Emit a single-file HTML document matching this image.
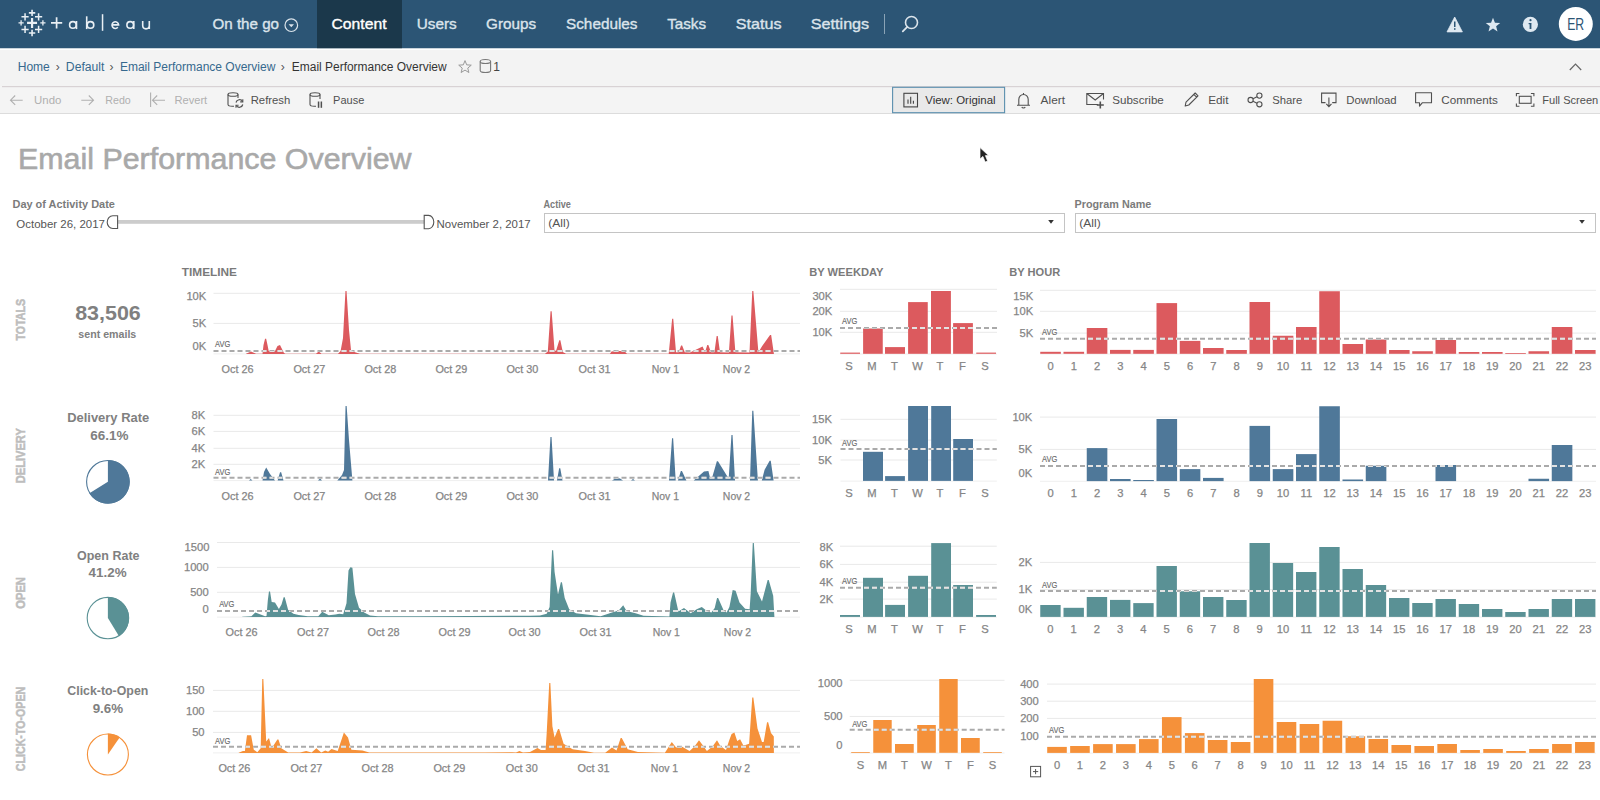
<!DOCTYPE html>
<html><head><meta charset="utf-8"><title>Email Performance Overview</title>
<style>
html,body{margin:0;padding:0;background:#fff;}
body{width:1600px;height:800px;overflow:hidden;position:relative;font-family:"Liberation Sans",sans-serif;}
svg{position:absolute;left:0;top:0;display:block;}
text{font-family:"Liberation Sans",sans-serif;}
</style></head><body>
<svg width="1600" height="800" viewBox="0 0 1600 800">
<rect x="0" y="0" width="1600" height="800" fill="#ffffff"/>

<rect x="0" y="0" width="1600" height="48.5" fill="#2c5575"/>
<rect x="317" y="0" width="85" height="48.5" fill="#1b384b"/>
<rect x="0" y="48.5" width="1600" height="1.6" fill="#ffffff"/>
<path d="M27.06 22.90H37.06M32.06 17.90V27.90" stroke="#e9eff4" stroke-width="2.2" fill="none"/>
<path d="M28.86 12.90H35.26M32.06 9.70V16.10" stroke="#e9eff4" stroke-width="1.6" fill="none"/>
<path d="M28.86 33.00H35.26M32.06 29.80V36.20" stroke="#e9eff4" stroke-width="1.6" fill="none"/>
<path d="M18.50 22.90H23.70M21.10 20.30V25.50" stroke="#e9eff4" stroke-width="1.3" fill="none"/>
<path d="M40.30 22.90H45.50M42.90 20.30V25.50" stroke="#e9eff4" stroke-width="1.3" fill="none"/>
<path d="M21.46 16.80H28.66M25.06 13.20V20.40" stroke="#e9eff4" stroke-width="1.5" fill="none"/>
<path d="M35.00 16.80H42.20M38.60 13.20V20.40" stroke="#e9eff4" stroke-width="1.5" fill="none"/>
<path d="M21.46 29.40H28.66M25.06 25.80V33.00" stroke="#e9eff4" stroke-width="1.5" fill="none"/>
<path d="M35.00 29.40H42.20M38.60 25.80V33.00" stroke="#e9eff4" stroke-width="1.5" fill="none"/>
<path d="M51.00 22.90H62.20M56.60 17.30V28.50" stroke="#e9eff4" stroke-width="1.7" fill="none"/>
<circle cx="72.90" cy="24.95" r="3.3" fill="none" stroke="#e9eff4" stroke-width="1.6"/>
<path d="M76.50 21.0V29.1" stroke="#e9eff4" stroke-width="1.6"/>
<circle cx="130.20" cy="24.95" r="3.3" fill="none" stroke="#e9eff4" stroke-width="1.6"/>
<path d="M133.80 21.0V29.1" stroke="#e9eff4" stroke-width="1.6"/>
<circle cx="90.5" cy="24.95" r="3.3" fill="none" stroke="#e9eff4" stroke-width="1.6"/>
<path d="M86.7 16.3V29.1" stroke="#e9eff4" stroke-width="1.6"/>
<path d="M112.1 24.9H118.6A3.3 3.3 0 1 0 117.8 27.3" fill="none" stroke="#e9eff4" stroke-width="1.6"/>
<path d="M142.7 20.9V25.6A3.3 3.3 0 0 0 149.3 25.6M149.3 20.9V29.1" fill="none" stroke="#e9eff4" stroke-width="1.6"/>
<rect x="101.8" y="14.2" width="1.5" height="16.6" fill="#e9eff4"/>
<text x="212.50" y="29.00" font-size="14.8" fill="#dbe4eb" textLength="66.50" lengthAdjust="spacingAndGlyphs" stroke="#dbe4eb" stroke-width="0.35">On the go</text>
<circle cx="291.3" cy="25.2" r="6.3" fill="none" stroke="#dbe4eb" stroke-width="1.2"/>
<path d="M288.6 24.2h5.4l-2.7 3z" fill="#dbe4eb"/>
<text x="331.50" y="29.00" font-size="14.8" fill="#ffffff" textLength="55.00" lengthAdjust="spacingAndGlyphs" stroke="#ffffff" stroke-width="0.35">Content</text>
<text x="416.75" y="29.00" font-size="14.8" fill="#dbe4eb" textLength="40.00" lengthAdjust="spacingAndGlyphs" stroke="#dbe4eb" stroke-width="0.35">Users</text>
<text x="486.10" y="29.00" font-size="14.8" fill="#dbe4eb" textLength="50.10" lengthAdjust="spacingAndGlyphs" stroke="#dbe4eb" stroke-width="0.35">Groups</text>
<text x="566.00" y="29.00" font-size="14.8" fill="#dbe4eb" textLength="71.50" lengthAdjust="spacingAndGlyphs" stroke="#dbe4eb" stroke-width="0.35">Schedules</text>
<text x="667.20" y="29.00" font-size="14.8" fill="#dbe4eb" textLength="38.90" lengthAdjust="spacingAndGlyphs" stroke="#dbe4eb" stroke-width="0.35">Tasks</text>
<text x="735.80" y="29.00" font-size="14.8" fill="#dbe4eb" textLength="45.70" lengthAdjust="spacingAndGlyphs" stroke="#dbe4eb" stroke-width="0.35">Status</text>
<text x="810.80" y="29.00" font-size="14.8" fill="#dbe4eb" textLength="58.40" lengthAdjust="spacingAndGlyphs" stroke="#dbe4eb" stroke-width="0.35">Settings</text>
<rect x="884" y="14" width="1" height="20" fill="#8aa3b6"/>
<circle cx="911.5" cy="22.5" r="6" fill="none" stroke="#dbe4eb" stroke-width="1.6"/>
<path d="M907.3 26.8L902.8 31.3" stroke="#dbe4eb" stroke-width="1.8" stroke-linecap="round"/>
<path d="M1454.7 17 L1462.4 31.9 L1447 31.9 Z" fill="#dfe9f1" stroke="#dfe9f1" stroke-width="0.8" stroke-linejoin="round"/>
<rect x="1454" y="21.5" width="1.5" height="5.5" fill="#2c5575"/><rect x="1454" y="28.2" width="1.5" height="1.6" fill="#2c5575"/>
<polygon points="1493.00,17.70 1494.94,22.63 1500.23,22.95 1496.14,26.32 1497.47,31.45 1493.00,28.60 1488.53,31.45 1489.86,26.32 1485.77,22.95 1491.06,22.63" fill="#dfe9f1"/>
<circle cx="1530.4" cy="24.4" r="7.6" fill="#dfe9f1"/>
<rect x="1529.6" y="23" width="1.8" height="6" fill="#2c5575"/><rect x="1528.6" y="23" width="2.5" height="1.2" fill="#2c5575"/><circle cx="1530.5" cy="20.2" r="1.1" fill="#2c5575"/>
<circle cx="1575.8" cy="23.9" r="17" fill="#ffffff"/>
<text x="1567.20" y="29.90" font-size="16" fill="#2c5575" textLength="17.00" lengthAdjust="spacingAndGlyphs">ER</text>
<rect x="0" y="50" width="1600" height="36" fill="#f3f3f3"/>
<text x="17.70" y="71.00" font-size="12" fill="#36698e" textLength="32.10" lengthAdjust="spacingAndGlyphs">Home</text>
<text x="55.80" y="70.50" font-size="12" fill="#555">›</text>
<text x="65.85" y="71.00" font-size="12" fill="#36698e" textLength="38.55" lengthAdjust="spacingAndGlyphs">Default</text>
<text x="109.60" y="70.50" font-size="12" fill="#555">›</text>
<text x="119.90" y="71.00" font-size="12" fill="#36698e" textLength="155.50" lengthAdjust="spacingAndGlyphs">Email Performance Overview</text>
<text x="280.80" y="70.50" font-size="12" fill="#555">›</text>
<text x="291.80" y="71.00" font-size="12" fill="#333333" textLength="154.85" lengthAdjust="spacingAndGlyphs">Email Performance Overview</text>
<polygon points="465.00,60.60 466.70,64.85 471.28,65.16 467.76,68.10 468.88,72.54 465.00,70.10 461.12,72.54 462.24,68.10 458.72,65.16 463.30,64.85" fill="none" stroke="#9a9a9a" stroke-width="1" stroke-linejoin="round"/>
<path d="M480.2 61.5 V70.5 A5.2 2 0 0 0 490.6 70.5 V61.5" fill="none" stroke="#777" stroke-width="1.1"/>
<ellipse cx="485.4" cy="61.5" rx="5.2" ry="2" fill="none" stroke="#777" stroke-width="1.1"/>
<text x="493.30" y="71.00" font-size="12" fill="#444">1</text>
<path d="M1569.8 70 L1575.5 64 L1581.2 70" fill="none" stroke="#666" stroke-width="1.2"/>
<rect x="0" y="86" width="1600" height="27" fill="#f4f4f4"/>
<rect x="2" y="86" width="1598" height="1.2" fill="#d8d2d4"/>
<rect x="0" y="113" width="1600" height="1" fill="#dcdcdc"/>
<path d="M22.7 100.2H10.5M15.2 95.5L10.5 100.2L15.2 104.9" fill="none" stroke="#b0b0b0" stroke-width="1.1"/>
<text x="34.10" y="104.00" font-size="11.2" fill="#b0b0b0" textLength="27.30" lengthAdjust="spacingAndGlyphs">Undo</text>
<path d="M81.3 100.2H93.5M88.8 95.5L93.5 100.2L88.8 104.9" fill="none" stroke="#b0b0b0" stroke-width="1.1"/>
<text x="105.30" y="104.00" font-size="11.2" fill="#b0b0b0" textLength="25.50" lengthAdjust="spacingAndGlyphs">Redo</text>
<path d="M150.6 92.6V106.9M165 100.2H152.5M157.2 95.5L152.5 100.2L157.2 104.9" fill="none" stroke="#b0b0b0" stroke-width="1.1"/>
<text x="174.40" y="104.00" font-size="11.2" fill="#b0b0b0" textLength="32.80" lengthAdjust="spacingAndGlyphs">Revert</text>
<path d="M228 94.5V104.5A5 1.8 0 0 0 234 106.2M238 94.5V98" fill="none" stroke="#505050" stroke-width="1.1"/>
<ellipse cx="233" cy="94.5" rx="5" ry="1.8" fill="none" stroke="#505050" stroke-width="1.1"/>
<path d="M236 102.5A3.6 3.6 0 0 1 242.6 101.5M242.8 104.5A3.6 3.6 0 0 1 236.2 105.5" fill="none" stroke="#505050" stroke-width="1.2"/>
<path d="M242.8 99.3v2.6h-2.6M236 107.8v-2.6h2.6" fill="none" stroke="#505050" stroke-width="1.1"/>
<text x="250.70" y="104.00" font-size="11.2" fill="#505050" textLength="39.60" lengthAdjust="spacingAndGlyphs">Refresh</text>
<path d="M310 94.5V104.5A5 1.8 0 0 0 316 106.2M320 94.5V99" fill="none" stroke="#505050" stroke-width="1.1"/>
<ellipse cx="315" cy="94.5" rx="5" ry="1.8" fill="none" stroke="#505050" stroke-width="1.1"/>
<rect x="317.8" y="101.5" width="1.5" height="6.3" fill="#505050"/><rect x="320.6" y="101.5" width="1.5" height="6.3" fill="#505050"/>
<text x="333.10" y="104.00" font-size="11.2" fill="#505050" textLength="31.20" lengthAdjust="spacingAndGlyphs">Pause</text>
<rect x="892.6" y="87.3" width="112" height="25.4" fill="#e9e9e9" stroke="#5a8fae" stroke-width="1.1"/>
<rect x="903.9" y="93.3" width="13.6" height="13.6" fill="none" stroke="#444" stroke-width="1.1"/>
<path d="M908 103.8V99.5M910.7 103.8V96.8M913.4 103.8V100.8" stroke="#444" stroke-width="1.1"/>
<text x="925.30" y="104.00" font-size="11.2" fill="#333333" textLength="70.30" lengthAdjust="spacingAndGlyphs">View: Original</text>
<path d="M1017 105.2H1030M1018.8 105.2V99.5A4.7 5 0 0 1 1028.2 99.5V105.2M1021.8 107A1.8 1.6 0 0 0 1025.2 107M1023.5 93v1.3" fill="none" stroke="#505050" stroke-width="1.1"/>
<text x="1040.60" y="104.00" font-size="11.2" fill="#505050" textLength="24.40" lengthAdjust="spacingAndGlyphs">Alert</text>
<path d="M1098 104.5H1086.8V93.5H1103.5V99.5M1086.8 93.5L1095.2 100L1103.5 93.5" fill="none" stroke="#505050" stroke-width="1.1"/>
<path d="M1100.3 101.5v7M1096.8 105h7" stroke="#505050" stroke-width="1.6"/>
<text x="1112.20" y="104.00" font-size="11.2" fill="#505050" textLength="51.60" lengthAdjust="spacingAndGlyphs">Subscribe</text>
<path d="M1185.2 106L1186 102.2L1195.2 93L1198 95.8L1188.8 105Z M1193.8 94.4l2.8 2.8" fill="none" stroke="#505050" stroke-width="1.1" stroke-linejoin="round"/>
<text x="1208.20" y="104.00" font-size="11.2" fill="#505050" textLength="20.30" lengthAdjust="spacingAndGlyphs">Edit</text>
<circle cx="1250.6" cy="100" r="2.6" fill="none" stroke="#505050" stroke-width="1.1"/><circle cx="1259.4" cy="95.6" r="2.6" fill="none" stroke="#505050" stroke-width="1.1"/><circle cx="1259.4" cy="104.3" r="2.6" fill="none" stroke="#505050" stroke-width="1.1"/>
<path d="M1253 98.8L1257 96.8M1253 101.2L1257 103.2" stroke="#505050" stroke-width="1.1"/>
<text x="1272.20" y="104.00" font-size="11.2" fill="#505050" textLength="30.10" lengthAdjust="spacingAndGlyphs">Share</text>
<path d="M1325.5 102.6H1321.6V93.1H1336V102.6H1332.2M1328.9 97.5V106.5M1326.3 103.8L1328.9 106.7L1331.5 103.8" fill="none" stroke="#505050" stroke-width="1.1"/>
<text x="1346.20" y="104.00" font-size="11.2" fill="#505050" textLength="50.50" lengthAdjust="spacingAndGlyphs">Download</text>
<path d="M1415.6 92.8H1431.5V102.8H1422.2L1419.5 106.1V102.8H1415.6Z" fill="none" stroke="#505050" stroke-width="1.1" stroke-linejoin="round"/>
<text x="1441.30" y="104.00" font-size="11.2" fill="#505050" textLength="56.50" lengthAdjust="spacingAndGlyphs">Comments</text>
<path d="M1516.4 96.3V93.5H1519.4M1530.9 93.5H1533.9V96.3M1533.9 103.4V106.2H1530.9M1519.4 106.2H1516.4V103.4" fill="none" stroke="#505050" stroke-width="1.1"/>
<rect x="1519.3" y="96.3" width="11.8" height="7" fill="none" stroke="#505050" stroke-width="1.1"/>
<text x="1542.20" y="104.00" font-size="11.2" fill="#505050" textLength="56.10" lengthAdjust="spacingAndGlyphs">Full Screen</text>
<text x="18.00" y="168.80" font-size="30.3" fill="#a9a9a9" textLength="393.50" lengthAdjust="spacingAndGlyphs" stroke="#a9a9a9" stroke-width="0.6">Email Performance Overview</text>
<text x="12.50" y="208.10" font-size="11.2" fill="#7b7b7b" font-weight="bold" textLength="102.40" lengthAdjust="spacingAndGlyphs">Day of Activity Date</text>
<text x="16.30" y="228.10" font-size="11.2" fill="#555555" textLength="88.60" lengthAdjust="spacingAndGlyphs">October 26, 2017</text>
<rect x="117.5" y="220" width="307" height="3.8" fill="#cccccc"/>
<path d="M117.6 215.8H112.8A5.6 6.35 0 0 0 112.8 228.5H117.6Z" fill="#ffffff" stroke="#555" stroke-width="1.1"/>
<path d="M424.2 215.4H428.6A5.2 6.65 0 0 1 428.6 228.7H424.2Z" fill="#ffffff" stroke="#555" stroke-width="1.1"/>
<text x="436.60" y="228.10" font-size="11.2" fill="#555555" textLength="94.10" lengthAdjust="spacingAndGlyphs">November 2, 2017</text>
<text x="543.50" y="207.80" font-size="11.2" fill="#7b7b7b" font-weight="bold" textLength="27.40" lengthAdjust="spacingAndGlyphs">Active</text>
<rect x="544.5" y="213.5" width="520" height="19" fill="#ffffff" stroke="#c4c4c4" stroke-width="1"/>
<text x="548.30" y="227.10" font-size="11.2" fill="#555555" textLength="21.40" lengthAdjust="spacingAndGlyphs">(All)</text>
<path d="M1048.2 220H1053.8L1051 223.8Z" fill="#333"/>
<text x="1074.50" y="207.60" font-size="11.2" fill="#7b7b7b" font-weight="bold" textLength="76.80" lengthAdjust="spacingAndGlyphs">Program Name</text>
<rect x="1075.5" y="213.5" width="520" height="19" fill="#ffffff" stroke="#c4c4c4" stroke-width="1"/>
<text x="1079.30" y="227.10" font-size="11.2" fill="#555555" textLength="21.40" lengthAdjust="spacingAndGlyphs">(All)</text>
<path d="M1579.2 220H1584.8L1582 223.8Z" fill="#333"/>
<path d="M980 147.6L980 159L982.9 156.4L985.2 162L987.6 161L985.4 155.6L988.6 155.6Z" fill="#222" stroke="#fff" stroke-width="0.7"/>
<text x="181.80" y="275.90" font-size="11.7" fill="#7a7a7a" font-weight="bold" textLength="55.20" lengthAdjust="spacingAndGlyphs">TIMELINE</text>
<text x="809.20" y="275.90" font-size="11.7" fill="#7a7a7a" font-weight="bold" textLength="74.20" lengthAdjust="spacingAndGlyphs">BY WEEKDAY</text>
<text x="1009.20" y="275.90" font-size="11.7" fill="#7a7a7a" font-weight="bold" textLength="51.00" lengthAdjust="spacingAndGlyphs">BY HOUR</text>
<g transform="translate(20.75,319.65) rotate(-90)">
<text x="-20.85" y="4.33" font-size="12.6" fill="#bdbdbd" font-weight="bold" textLength="41.70" lengthAdjust="spacingAndGlyphs" stroke="#bdbdbd" stroke-width="0.5">TOTALS</text>
</g>
<text x="75.20" y="320.20" font-size="20.8" fill="#808080" font-weight="bold" textLength="65.60" lengthAdjust="spacingAndGlyphs">83,506</text>
<text x="78.30" y="337.70" font-size="11.6" fill="#808080" font-weight="bold" textLength="58.00" lengthAdjust="spacingAndGlyphs">sent emails</text>
<rect x="213.50" y="292.80" width="586.50" height="1" fill="#e9e9e9"/>
<rect x="213.50" y="322.90" width="586.50" height="1" fill="#e9e9e9"/>
<rect x="213.50" y="353.40" width="586.50" height="1" fill="#efefef"/>
<text x="206.30" y="300.05" font-size="11.2" fill="#858585" text-anchor="end" stroke="#858585" stroke-width="0.25">10K</text>
<text x="206.30" y="327.05" font-size="11.2" fill="#858585" text-anchor="end" stroke="#858585" stroke-width="0.25">5K</text>
<text x="206.30" y="350.05" font-size="11.2" fill="#858585" text-anchor="end" stroke="#858585" stroke-width="0.25">0K</text>
<polygon points="246.00,353.90 246.00,353.70 251.00,351.50 256.00,353.70 262.50,353.70 263.50,345.00 265.05,338.70 266.15,338.70 267.50,345.00 268.70,351.00 275.00,351.00 277.50,346.00 280.00,345.00 282.50,350.00 284.00,353.00 285.50,353.70 316.00,353.70 318.70,351.50 321.50,353.70 338.00,353.70 340.60,351.00 343.00,338.00 345.45,291.00 346.55,291.00 349.00,330.00 351.00,350.00 355.00,352.30 360.00,353.70 545.00,353.70 547.80,351.50 550.55,311.20 551.65,311.20 554.50,350.00 556.00,351.00 559.25,340.30 560.35,340.30 562.80,352.00 566.00,353.70 610.00,353.70 611.50,351.50 617.00,350.80 624.70,351.50 627.00,353.70 668.70,353.70 672.15,318.70 673.25,318.70 676.00,352.20 678.70,352.20 681.05,345.50 682.15,345.50 684.80,352.20 690.00,352.50 702.60,346.40 705.00,352.20 707.25,345.00 708.35,345.00 711.00,352.20 714.40,352.20 716.65,336.00 717.75,336.00 720.00,352.20 728.90,352.50 731.45,315.50 732.55,315.50 735.40,352.20 749.50,352.50 752.25,291.10 753.35,291.10 758.40,352.20 762.20,346.00 770.05,335.10 771.15,335.10 773.90,353.70 773.90,353.90" fill="#dc5a5e"/>
<clipPath id="cl1"><polygon points="246.00,353.90 246.00,353.70 251.00,351.50 256.00,353.70 262.50,353.70 263.50,345.00 265.05,338.70 266.15,338.70 267.50,345.00 268.70,351.00 275.00,351.00 277.50,346.00 280.00,345.00 282.50,350.00 284.00,353.00 285.50,353.70 316.00,353.70 318.70,351.50 321.50,353.70 338.00,353.70 340.60,351.00 343.00,338.00 345.45,291.00 346.55,291.00 349.00,330.00 351.00,350.00 355.00,352.30 360.00,353.70 545.00,353.70 547.80,351.50 550.55,311.20 551.65,311.20 554.50,350.00 556.00,351.00 559.25,340.30 560.35,340.30 562.80,352.00 566.00,353.70 610.00,353.70 611.50,351.50 617.00,350.80 624.70,351.50 627.00,353.70 668.70,353.70 672.15,318.70 673.25,318.70 676.00,352.20 678.70,352.20 681.05,345.50 682.15,345.50 684.80,352.20 690.00,352.50 702.60,346.40 705.00,352.20 707.25,345.00 708.35,345.00 711.00,352.20 714.40,352.20 716.65,336.00 717.75,336.00 720.00,352.20 728.90,352.50 731.45,315.50 732.55,315.50 735.40,352.20 749.50,352.50 752.25,291.10 753.35,291.10 758.40,352.20 762.20,346.00 770.05,335.10 771.15,335.10 773.90,353.70 773.90,353.90"/></clipPath>
<path d="M213.50 351.00H800.00" stroke="#aaaaaa" stroke-width="2" stroke-dasharray="5 3" fill="none"/>
<path d="M213.50 351.00H800.00" stroke="#e2e2e2" stroke-width="2" stroke-dasharray="5 3" fill="none" clip-path="url(#cl1)"/>
<text x="215.00" y="347.30" font-size="9" fill="#6a6a6a" textLength="15.20" lengthAdjust="spacingAndGlyphs" stroke="#6a6a6a" stroke-width="0.15">AVG</text>
<text x="221.50" y="373.05" font-size="11.2" fill="#858585" textLength="32.00" lengthAdjust="spacingAndGlyphs" stroke="#858585" stroke-width="0.25">Oct 26</text>
<text x="293.40" y="373.05" font-size="11.2" fill="#858585" textLength="32.00" lengthAdjust="spacingAndGlyphs" stroke="#858585" stroke-width="0.25">Oct 27</text>
<text x="364.40" y="373.05" font-size="11.2" fill="#858585" textLength="32.00" lengthAdjust="spacingAndGlyphs" stroke="#858585" stroke-width="0.25">Oct 28</text>
<text x="435.40" y="373.05" font-size="11.2" fill="#858585" textLength="32.00" lengthAdjust="spacingAndGlyphs" stroke="#858585" stroke-width="0.25">Oct 29</text>
<text x="506.40" y="373.05" font-size="11.2" fill="#858585" textLength="32.00" lengthAdjust="spacingAndGlyphs" stroke="#858585" stroke-width="0.25">Oct 30</text>
<text x="578.50" y="373.05" font-size="11.2" fill="#858585" textLength="32.00" lengthAdjust="spacingAndGlyphs" stroke="#858585" stroke-width="0.25">Oct 31</text>
<text x="651.75" y="373.05" font-size="11.2" fill="#858585" textLength="27.30" lengthAdjust="spacingAndGlyphs" stroke="#858585" stroke-width="0.25">Nov 1</text>
<text x="722.85" y="373.05" font-size="11.2" fill="#858585" textLength="27.30" lengthAdjust="spacingAndGlyphs" stroke="#858585" stroke-width="0.25">Nov 2</text>
<rect x="840.00" y="288.80" width="157.00" height="1" fill="#e9e9e9"/>
<rect x="840.00" y="310.80" width="157.00" height="1" fill="#e9e9e9"/>
<rect x="840.00" y="331.80" width="157.00" height="1" fill="#e9e9e9"/>
<rect x="840.00" y="353.50" width="157.00" height="1" fill="#efefef"/>
<rect x="840.25" y="352.60" width="19.75" height="1.20" fill="#dc5a5e"/>
<rect x="863.10" y="328.50" width="19.65" height="25.30" fill="#dc5a5e"/>
<rect x="885.00" y="347.10" width="20.00" height="6.70" fill="#dc5a5e"/>
<rect x="908.10" y="302.10" width="19.65" height="51.70" fill="#dc5a5e"/>
<rect x="931.00" y="291.00" width="19.90" height="62.80" fill="#dc5a5e"/>
<rect x="953.10" y="323.10" width="19.80" height="30.70" fill="#dc5a5e"/>
<rect x="976.25" y="352.60" width="19.75" height="1.20" fill="#dc5a5e"/>
<clipPath id="cl2"><rect x="840.25" y="352.60" width="19.75" height="1.20"/><rect x="863.10" y="328.50" width="19.65" height="25.30"/><rect x="885.00" y="347.10" width="20.00" height="6.70"/><rect x="908.10" y="302.10" width="19.65" height="51.70"/><rect x="931.00" y="291.00" width="19.90" height="62.80"/><rect x="953.10" y="323.10" width="19.80" height="30.70"/><rect x="976.25" y="352.60" width="19.75" height="1.20"/></clipPath>
<path d="M840.00 327.90H997.00" stroke="#aaaaaa" stroke-width="2" stroke-dasharray="5 3" fill="none"/>
<path d="M840.00 327.90H997.00" stroke="#e2e2e2" stroke-width="2" stroke-dasharray="5 3" fill="none" clip-path="url(#cl2)"/>
<text x="842.00" y="324.30" font-size="9" fill="#6a6a6a" textLength="15.20" lengthAdjust="spacingAndGlyphs" stroke="#6a6a6a" stroke-width="0.15">AVG</text>
<text x="832.30" y="300.05" font-size="11.2" fill="#858585" text-anchor="end" stroke="#858585" stroke-width="0.25">30K</text>
<text x="832.30" y="315.05" font-size="11.2" fill="#858585" text-anchor="end" stroke="#858585" stroke-width="0.25">20K</text>
<text x="832.30" y="336.05" font-size="11.2" fill="#858585" text-anchor="end" stroke="#858585" stroke-width="0.25">10K</text>
<text x="849.00" y="370.05" font-size="11.2" fill="#858585" text-anchor="middle" stroke="#858585" stroke-width="0.25">S</text>
<text x="872.00" y="370.05" font-size="11.2" fill="#858585" text-anchor="middle" stroke="#858585" stroke-width="0.25">M</text>
<text x="894.50" y="370.05" font-size="11.2" fill="#858585" text-anchor="middle" stroke="#858585" stroke-width="0.25">T</text>
<text x="917.50" y="370.05" font-size="11.2" fill="#858585" text-anchor="middle" stroke="#858585" stroke-width="0.25">W</text>
<text x="940.00" y="370.05" font-size="11.2" fill="#858585" text-anchor="middle" stroke="#858585" stroke-width="0.25">T</text>
<text x="962.50" y="370.05" font-size="11.2" fill="#858585" text-anchor="middle" stroke="#858585" stroke-width="0.25">F</text>
<text x="985.00" y="370.05" font-size="11.2" fill="#858585" text-anchor="middle" stroke="#858585" stroke-width="0.25">S</text>
<rect x="1040.00" y="289.80" width="556.00" height="1" fill="#e9e9e9"/>
<rect x="1040.00" y="310.80" width="556.00" height="1" fill="#e9e9e9"/>
<rect x="1040.00" y="332.60" width="556.00" height="1" fill="#e9e9e9"/>
<rect x="1040.00" y="353.50" width="556.00" height="1" fill="#efefef"/>
<rect x="1040.25" y="351.80" width="20.60" height="2.00" fill="#dc5a5e"/>
<rect x="1063.50" y="351.80" width="20.60" height="2.00" fill="#dc5a5e"/>
<rect x="1086.75" y="328.00" width="20.60" height="25.80" fill="#dc5a5e"/>
<rect x="1110.00" y="349.90" width="20.60" height="3.90" fill="#dc5a5e"/>
<rect x="1133.25" y="349.90" width="20.60" height="3.90" fill="#dc5a5e"/>
<rect x="1156.50" y="303.10" width="20.60" height="50.70" fill="#dc5a5e"/>
<rect x="1179.75" y="340.90" width="20.60" height="12.90" fill="#dc5a5e"/>
<rect x="1203.00" y="348.00" width="20.60" height="5.80" fill="#dc5a5e"/>
<rect x="1226.25" y="350.00" width="20.60" height="3.80" fill="#dc5a5e"/>
<rect x="1249.50" y="302.00" width="20.60" height="51.80" fill="#dc5a5e"/>
<rect x="1272.75" y="335.75" width="20.60" height="18.05" fill="#dc5a5e"/>
<rect x="1296.00" y="327.00" width="20.60" height="26.80" fill="#dc5a5e"/>
<rect x="1319.25" y="291.25" width="20.60" height="62.55" fill="#dc5a5e"/>
<rect x="1342.50" y="344.00" width="20.60" height="9.80" fill="#dc5a5e"/>
<rect x="1365.75" y="339.50" width="20.60" height="14.30" fill="#dc5a5e"/>
<rect x="1389.00" y="350.00" width="20.60" height="3.80" fill="#dc5a5e"/>
<rect x="1412.25" y="351.25" width="20.60" height="2.55" fill="#dc5a5e"/>
<rect x="1435.50" y="340.00" width="20.60" height="13.80" fill="#dc5a5e"/>
<rect x="1458.75" y="352.00" width="20.60" height="1.80" fill="#dc5a5e"/>
<rect x="1482.00" y="352.00" width="20.60" height="1.80" fill="#dc5a5e"/>
<rect x="1505.25" y="353.00" width="20.60" height="0.80" fill="#dc5a5e"/>
<rect x="1528.50" y="351.25" width="20.60" height="2.55" fill="#dc5a5e"/>
<rect x="1551.75" y="327.00" width="20.60" height="26.80" fill="#dc5a5e"/>
<rect x="1575.00" y="350.00" width="20.60" height="3.80" fill="#dc5a5e"/>
<clipPath id="cl3"><rect x="1040.25" y="351.80" width="20.60" height="2.00"/><rect x="1063.50" y="351.80" width="20.60" height="2.00"/><rect x="1086.75" y="328.00" width="20.60" height="25.80"/><rect x="1110.00" y="349.90" width="20.60" height="3.90"/><rect x="1133.25" y="349.90" width="20.60" height="3.90"/><rect x="1156.50" y="303.10" width="20.60" height="50.70"/><rect x="1179.75" y="340.90" width="20.60" height="12.90"/><rect x="1203.00" y="348.00" width="20.60" height="5.80"/><rect x="1226.25" y="350.00" width="20.60" height="3.80"/><rect x="1249.50" y="302.00" width="20.60" height="51.80"/><rect x="1272.75" y="335.75" width="20.60" height="18.05"/><rect x="1296.00" y="327.00" width="20.60" height="26.80"/><rect x="1319.25" y="291.25" width="20.60" height="62.55"/><rect x="1342.50" y="344.00" width="20.60" height="9.80"/><rect x="1365.75" y="339.50" width="20.60" height="14.30"/><rect x="1389.00" y="350.00" width="20.60" height="3.80"/><rect x="1412.25" y="351.25" width="20.60" height="2.55"/><rect x="1435.50" y="340.00" width="20.60" height="13.80"/><rect x="1458.75" y="352.00" width="20.60" height="1.80"/><rect x="1482.00" y="352.00" width="20.60" height="1.80"/><rect x="1505.25" y="353.00" width="20.60" height="0.80"/><rect x="1528.50" y="351.25" width="20.60" height="2.55"/><rect x="1551.75" y="327.00" width="20.60" height="26.80"/><rect x="1575.00" y="350.00" width="20.60" height="3.80"/></clipPath>
<path d="M1040.00 338.70H1596.00" stroke="#aaaaaa" stroke-width="2" stroke-dasharray="5 3" fill="none"/>
<path d="M1040.00 338.70H1596.00" stroke="#e2e2e2" stroke-width="2" stroke-dasharray="5 3" fill="none" clip-path="url(#cl3)"/>
<text x="1042.00" y="335.30" font-size="9" fill="#6a6a6a" textLength="15.20" lengthAdjust="spacingAndGlyphs" stroke="#6a6a6a" stroke-width="0.15">AVG</text>
<text x="1033.20" y="300.05" font-size="11.2" fill="#858585" text-anchor="end" stroke="#858585" stroke-width="0.25">15K</text>
<text x="1033.20" y="315.15" font-size="11.2" fill="#858585" text-anchor="end" stroke="#858585" stroke-width="0.25">10K</text>
<text x="1033.20" y="336.95" font-size="11.2" fill="#858585" text-anchor="end" stroke="#858585" stroke-width="0.25">5K</text>
<text x="1050.55" y="370.05" font-size="11.2" fill="#858585" text-anchor="middle" stroke="#858585" stroke-width="0.25">0</text>
<text x="1073.80" y="370.05" font-size="11.2" fill="#858585" text-anchor="middle" stroke="#858585" stroke-width="0.25">1</text>
<text x="1097.05" y="370.05" font-size="11.2" fill="#858585" text-anchor="middle" stroke="#858585" stroke-width="0.25">2</text>
<text x="1120.30" y="370.05" font-size="11.2" fill="#858585" text-anchor="middle" stroke="#858585" stroke-width="0.25">3</text>
<text x="1143.55" y="370.05" font-size="11.2" fill="#858585" text-anchor="middle" stroke="#858585" stroke-width="0.25">4</text>
<text x="1166.80" y="370.05" font-size="11.2" fill="#858585" text-anchor="middle" stroke="#858585" stroke-width="0.25">5</text>
<text x="1190.05" y="370.05" font-size="11.2" fill="#858585" text-anchor="middle" stroke="#858585" stroke-width="0.25">6</text>
<text x="1213.30" y="370.05" font-size="11.2" fill="#858585" text-anchor="middle" stroke="#858585" stroke-width="0.25">7</text>
<text x="1236.55" y="370.05" font-size="11.2" fill="#858585" text-anchor="middle" stroke="#858585" stroke-width="0.25">8</text>
<text x="1259.80" y="370.05" font-size="11.2" fill="#858585" text-anchor="middle" stroke="#858585" stroke-width="0.25">9</text>
<text x="1283.05" y="370.05" font-size="11.2" fill="#858585" text-anchor="middle" stroke="#858585" stroke-width="0.25">10</text>
<text x="1306.30" y="370.05" font-size="11.2" fill="#858585" text-anchor="middle" stroke="#858585" stroke-width="0.25">11</text>
<text x="1329.55" y="370.05" font-size="11.2" fill="#858585" text-anchor="middle" stroke="#858585" stroke-width="0.25">12</text>
<text x="1352.80" y="370.05" font-size="11.2" fill="#858585" text-anchor="middle" stroke="#858585" stroke-width="0.25">13</text>
<text x="1376.05" y="370.05" font-size="11.2" fill="#858585" text-anchor="middle" stroke="#858585" stroke-width="0.25">14</text>
<text x="1399.30" y="370.05" font-size="11.2" fill="#858585" text-anchor="middle" stroke="#858585" stroke-width="0.25">15</text>
<text x="1422.55" y="370.05" font-size="11.2" fill="#858585" text-anchor="middle" stroke="#858585" stroke-width="0.25">16</text>
<text x="1445.80" y="370.05" font-size="11.2" fill="#858585" text-anchor="middle" stroke="#858585" stroke-width="0.25">17</text>
<text x="1469.05" y="370.05" font-size="11.2" fill="#858585" text-anchor="middle" stroke="#858585" stroke-width="0.25">18</text>
<text x="1492.30" y="370.05" font-size="11.2" fill="#858585" text-anchor="middle" stroke="#858585" stroke-width="0.25">19</text>
<text x="1515.55" y="370.05" font-size="11.2" fill="#858585" text-anchor="middle" stroke="#858585" stroke-width="0.25">20</text>
<text x="1538.80" y="370.05" font-size="11.2" fill="#858585" text-anchor="middle" stroke="#858585" stroke-width="0.25">21</text>
<text x="1562.05" y="370.05" font-size="11.2" fill="#858585" text-anchor="middle" stroke="#858585" stroke-width="0.25">22</text>
<text x="1585.30" y="370.05" font-size="11.2" fill="#858585" text-anchor="middle" stroke="#858585" stroke-width="0.25">23</text>
<g transform="translate(20.70,455.70) rotate(-90)">
<text x="-27.50" y="4.33" font-size="12.6" fill="#bdbdbd" font-weight="bold" textLength="55.00" lengthAdjust="spacingAndGlyphs" stroke="#bdbdbd" stroke-width="0.5">DELIVERY</text>
</g>
<text x="67.20" y="421.90" font-size="12.6" fill="#808080" font-weight="bold" textLength="82.00" lengthAdjust="spacingAndGlyphs">Delivery Rate</text>
<text x="90.30" y="440.00" font-size="12.6" fill="#808080" font-weight="bold" textLength="38.20" lengthAdjust="spacingAndGlyphs">66.1%</text>
<circle cx="107.9" cy="481.8" r="21.3" fill="#ffffff" stroke="#4f7899" stroke-width="1.1"/>
<path d="M107.9 481.8 L107.9 460.0 A21.8 21.8 0 1 1 89.42 493.37 Z" fill="#4f7899"/>
<rect x="213.50" y="414.80" width="586.50" height="1" fill="#e9e9e9"/>
<rect x="213.50" y="430.90" width="586.50" height="1" fill="#e9e9e9"/>
<rect x="213.50" y="447.80" width="586.50" height="1" fill="#e9e9e9"/>
<rect x="213.50" y="463.80" width="586.50" height="1" fill="#e9e9e9"/>
<rect x="213.50" y="480.10" width="586.50" height="1" fill="#efefef"/>
<text x="205.30" y="419.35" font-size="11.2" fill="#858585" text-anchor="end" stroke="#858585" stroke-width="0.25">8K</text>
<text x="205.30" y="435.35" font-size="11.2" fill="#858585" text-anchor="end" stroke="#858585" stroke-width="0.25">6K</text>
<text x="205.30" y="452.25" font-size="11.2" fill="#858585" text-anchor="end" stroke="#858585" stroke-width="0.25">4K</text>
<text x="205.30" y="468.25" font-size="11.2" fill="#858585" text-anchor="end" stroke="#858585" stroke-width="0.25">2K</text>
<polygon points="249.00,480.60 249.00,480.50 250.70,479.00 252.50,480.50 262.50,480.50 264.00,472.00 266.20,467.60 270.00,474.00 275.00,480.50 277.60,480.50 280.05,472.20 281.15,472.20 283.50,480.50 318.00,480.50 320.00,478.50 322.00,480.50 337.30,480.50 342.00,475.00 344.00,470.00 345.55,405.90 346.65,405.90 349.00,440.00 352.40,480.50 548.00,480.50 550.45,437.00 551.55,437.00 554.00,480.50 557.00,480.50 559.15,468.20 560.25,468.20 562.50,480.50 612.00,480.50 616.00,478.00 620.00,478.50 623.00,480.50 631.00,480.50 633.00,479.00 635.00,480.50 669.00,480.50 672.05,438.20 673.15,438.20 675.70,480.50 678.00,480.50 680.85,471.10 681.95,471.10 686.40,480.50 693.70,480.50 699.40,475.40 704.00,471.50 708.40,470.90 710.00,477.60 712.30,477.00 716.85,461.30 717.95,461.30 728.00,477.60 728.80,477.00 731.45,434.90 732.55,434.90 735.00,480.50 750.00,480.50 752.25,410.70 753.35,410.70 757.90,480.50 761.80,480.50 764.60,469.70 769.65,460.70 770.75,460.70 773.60,480.50 773.60,480.60" fill="#4f7899"/>
<clipPath id="cl4"><polygon points="249.00,480.60 249.00,480.50 250.70,479.00 252.50,480.50 262.50,480.50 264.00,472.00 266.20,467.60 270.00,474.00 275.00,480.50 277.60,480.50 280.05,472.20 281.15,472.20 283.50,480.50 318.00,480.50 320.00,478.50 322.00,480.50 337.30,480.50 342.00,475.00 344.00,470.00 345.55,405.90 346.65,405.90 349.00,440.00 352.40,480.50 548.00,480.50 550.45,437.00 551.55,437.00 554.00,480.50 557.00,480.50 559.15,468.20 560.25,468.20 562.50,480.50 612.00,480.50 616.00,478.00 620.00,478.50 623.00,480.50 631.00,480.50 633.00,479.00 635.00,480.50 669.00,480.50 672.05,438.20 673.15,438.20 675.70,480.50 678.00,480.50 680.85,471.10 681.95,471.10 686.40,480.50 693.70,480.50 699.40,475.40 704.00,471.50 708.40,470.90 710.00,477.60 712.30,477.00 716.85,461.30 717.95,461.30 728.00,477.60 728.80,477.00 731.45,434.90 732.55,434.90 735.00,480.50 750.00,480.50 752.25,410.70 753.35,410.70 757.90,480.50 761.80,480.50 764.60,469.70 769.65,460.70 770.75,460.70 773.60,480.50 773.60,480.60"/></clipPath>
<path d="M213.50 477.80H800.00" stroke="#aaaaaa" stroke-width="2" stroke-dasharray="5 3" fill="none"/>
<path d="M213.50 477.80H800.00" stroke="#e2e2e2" stroke-width="2" stroke-dasharray="5 3" fill="none" clip-path="url(#cl4)"/>
<text x="215.00" y="474.60" font-size="9" fill="#6a6a6a" textLength="15.20" lengthAdjust="spacingAndGlyphs" stroke="#6a6a6a" stroke-width="0.15">AVG</text>
<text x="221.50" y="500.45" font-size="11.2" fill="#858585" textLength="32.00" lengthAdjust="spacingAndGlyphs" stroke="#858585" stroke-width="0.25">Oct 26</text>
<text x="293.40" y="500.45" font-size="11.2" fill="#858585" textLength="32.00" lengthAdjust="spacingAndGlyphs" stroke="#858585" stroke-width="0.25">Oct 27</text>
<text x="364.40" y="500.45" font-size="11.2" fill="#858585" textLength="32.00" lengthAdjust="spacingAndGlyphs" stroke="#858585" stroke-width="0.25">Oct 28</text>
<text x="435.40" y="500.45" font-size="11.2" fill="#858585" textLength="32.00" lengthAdjust="spacingAndGlyphs" stroke="#858585" stroke-width="0.25">Oct 29</text>
<text x="506.40" y="500.45" font-size="11.2" fill="#858585" textLength="32.00" lengthAdjust="spacingAndGlyphs" stroke="#858585" stroke-width="0.25">Oct 30</text>
<text x="578.50" y="500.45" font-size="11.2" fill="#858585" textLength="32.00" lengthAdjust="spacingAndGlyphs" stroke="#858585" stroke-width="0.25">Oct 31</text>
<text x="651.75" y="500.45" font-size="11.2" fill="#858585" textLength="27.30" lengthAdjust="spacingAndGlyphs" stroke="#858585" stroke-width="0.25">Nov 1</text>
<text x="722.85" y="500.45" font-size="11.2" fill="#858585" textLength="27.30" lengthAdjust="spacingAndGlyphs" stroke="#858585" stroke-width="0.25">Nov 2</text>
<rect x="840.50" y="418.80" width="156.30" height="1" fill="#e9e9e9"/>
<rect x="840.50" y="439.60" width="156.30" height="1" fill="#e9e9e9"/>
<rect x="840.50" y="459.50" width="156.30" height="1" fill="#e9e9e9"/>
<rect x="840.50" y="480.60" width="156.30" height="1" fill="#efefef"/>
<rect x="863.00" y="451.80" width="20.00" height="29.10" fill="#4f7899"/>
<rect x="885.10" y="476.10" width="19.80" height="4.80" fill="#4f7899"/>
<rect x="908.10" y="406.00" width="19.90" height="74.90" fill="#4f7899"/>
<rect x="931.20" y="406.00" width="19.80" height="74.90" fill="#4f7899"/>
<rect x="953.20" y="439.00" width="19.80" height="41.90" fill="#4f7899"/>
<clipPath id="cl5"><rect x="863.00" y="451.80" width="20.00" height="29.10"/><rect x="885.10" y="476.10" width="19.80" height="4.80"/><rect x="908.10" y="406.00" width="19.90" height="74.90"/><rect x="931.20" y="406.00" width="19.80" height="74.90"/><rect x="953.20" y="439.00" width="19.80" height="41.90"/></clipPath>
<path d="M840.50 448.90H996.80" stroke="#aaaaaa" stroke-width="2" stroke-dasharray="5 3" fill="none"/>
<path d="M840.50 448.90H996.80" stroke="#e2e2e2" stroke-width="2" stroke-dasharray="5 3" fill="none" clip-path="url(#cl5)"/>
<text x="842.00" y="445.50" font-size="9" fill="#6a6a6a" textLength="15.20" lengthAdjust="spacingAndGlyphs" stroke="#6a6a6a" stroke-width="0.15">AVG</text>
<text x="831.90" y="423.15" font-size="11.2" fill="#858585" text-anchor="end" stroke="#858585" stroke-width="0.25">15K</text>
<text x="831.90" y="444.25" font-size="11.2" fill="#858585" text-anchor="end" stroke="#858585" stroke-width="0.25">10K</text>
<text x="831.90" y="464.15" font-size="11.2" fill="#858585" text-anchor="end" stroke="#858585" stroke-width="0.25">5K</text>
<text x="849.00" y="496.75" font-size="11.2" fill="#858585" text-anchor="middle" stroke="#858585" stroke-width="0.25">S</text>
<text x="872.00" y="496.75" font-size="11.2" fill="#858585" text-anchor="middle" stroke="#858585" stroke-width="0.25">M</text>
<text x="894.50" y="496.75" font-size="11.2" fill="#858585" text-anchor="middle" stroke="#858585" stroke-width="0.25">T</text>
<text x="917.50" y="496.75" font-size="11.2" fill="#858585" text-anchor="middle" stroke="#858585" stroke-width="0.25">W</text>
<text x="940.00" y="496.75" font-size="11.2" fill="#858585" text-anchor="middle" stroke="#858585" stroke-width="0.25">T</text>
<text x="962.50" y="496.75" font-size="11.2" fill="#858585" text-anchor="middle" stroke="#858585" stroke-width="0.25">F</text>
<text x="985.00" y="496.75" font-size="11.2" fill="#858585" text-anchor="middle" stroke="#858585" stroke-width="0.25">S</text>
<rect x="1040.00" y="416.60" width="556.00" height="1" fill="#e9e9e9"/>
<rect x="1040.00" y="448.90" width="556.00" height="1" fill="#e9e9e9"/>
<rect x="1040.00" y="480.80" width="556.00" height="1" fill="#efefef"/>
<rect x="1086.75" y="448.10" width="20.60" height="33.00" fill="#4f7899"/>
<rect x="1110.00" y="479.00" width="20.60" height="2.10" fill="#4f7899"/>
<rect x="1133.25" y="480.00" width="20.60" height="1.10" fill="#4f7899"/>
<rect x="1156.50" y="419.00" width="20.60" height="62.10" fill="#4f7899"/>
<rect x="1179.75" y="469.10" width="20.60" height="12.00" fill="#4f7899"/>
<rect x="1203.00" y="477.90" width="20.60" height="3.20" fill="#4f7899"/>
<rect x="1249.50" y="425.90" width="20.60" height="55.20" fill="#4f7899"/>
<rect x="1272.75" y="469.10" width="20.60" height="12.00" fill="#4f7899"/>
<rect x="1296.00" y="454.10" width="20.60" height="27.00" fill="#4f7899"/>
<rect x="1319.25" y="406.25" width="20.60" height="74.85" fill="#4f7899"/>
<rect x="1342.50" y="479.50" width="20.60" height="1.60" fill="#4f7899"/>
<rect x="1365.75" y="465.75" width="20.60" height="15.35" fill="#4f7899"/>
<rect x="1435.50" y="465.00" width="20.60" height="16.10" fill="#4f7899"/>
<rect x="1528.50" y="478.75" width="20.60" height="2.35" fill="#4f7899"/>
<rect x="1551.75" y="445.00" width="20.60" height="36.10" fill="#4f7899"/>
<clipPath id="cl6"><rect x="1086.75" y="448.10" width="20.60" height="33.00"/><rect x="1110.00" y="479.00" width="20.60" height="2.10"/><rect x="1133.25" y="480.00" width="20.60" height="1.10"/><rect x="1156.50" y="419.00" width="20.60" height="62.10"/><rect x="1179.75" y="469.10" width="20.60" height="12.00"/><rect x="1203.00" y="477.90" width="20.60" height="3.20"/><rect x="1249.50" y="425.90" width="20.60" height="55.20"/><rect x="1272.75" y="469.10" width="20.60" height="12.00"/><rect x="1296.00" y="454.10" width="20.60" height="27.00"/><rect x="1319.25" y="406.25" width="20.60" height="74.85"/><rect x="1342.50" y="479.50" width="20.60" height="1.60"/><rect x="1365.75" y="465.75" width="20.60" height="15.35"/><rect x="1435.50" y="465.00" width="20.60" height="16.10"/><rect x="1528.50" y="478.75" width="20.60" height="2.35"/><rect x="1551.75" y="445.00" width="20.60" height="36.10"/></clipPath>
<path d="M1040.00 465.90H1596.00" stroke="#aaaaaa" stroke-width="2" stroke-dasharray="5 3" fill="none"/>
<path d="M1040.00 465.90H1596.00" stroke="#e2e2e2" stroke-width="2" stroke-dasharray="5 3" fill="none" clip-path="url(#cl6)"/>
<text x="1042.00" y="462.40" font-size="9" fill="#6a6a6a" textLength="15.20" lengthAdjust="spacingAndGlyphs" stroke="#6a6a6a" stroke-width="0.15">AVG</text>
<text x="1032.30" y="420.95" font-size="11.2" fill="#858585" text-anchor="end" stroke="#858585" stroke-width="0.25">10K</text>
<text x="1032.30" y="453.25" font-size="11.2" fill="#858585" text-anchor="end" stroke="#858585" stroke-width="0.25">5K</text>
<text x="1032.30" y="477.25" font-size="11.2" fill="#858585" text-anchor="end" stroke="#858585" stroke-width="0.25">0K</text>
<text x="1050.55" y="497.25" font-size="11.2" fill="#858585" text-anchor="middle" stroke="#858585" stroke-width="0.25">0</text>
<text x="1073.80" y="497.25" font-size="11.2" fill="#858585" text-anchor="middle" stroke="#858585" stroke-width="0.25">1</text>
<text x="1097.05" y="497.25" font-size="11.2" fill="#858585" text-anchor="middle" stroke="#858585" stroke-width="0.25">2</text>
<text x="1120.30" y="497.25" font-size="11.2" fill="#858585" text-anchor="middle" stroke="#858585" stroke-width="0.25">3</text>
<text x="1143.55" y="497.25" font-size="11.2" fill="#858585" text-anchor="middle" stroke="#858585" stroke-width="0.25">4</text>
<text x="1166.80" y="497.25" font-size="11.2" fill="#858585" text-anchor="middle" stroke="#858585" stroke-width="0.25">5</text>
<text x="1190.05" y="497.25" font-size="11.2" fill="#858585" text-anchor="middle" stroke="#858585" stroke-width="0.25">6</text>
<text x="1213.30" y="497.25" font-size="11.2" fill="#858585" text-anchor="middle" stroke="#858585" stroke-width="0.25">7</text>
<text x="1236.55" y="497.25" font-size="11.2" fill="#858585" text-anchor="middle" stroke="#858585" stroke-width="0.25">8</text>
<text x="1259.80" y="497.25" font-size="11.2" fill="#858585" text-anchor="middle" stroke="#858585" stroke-width="0.25">9</text>
<text x="1283.05" y="497.25" font-size="11.2" fill="#858585" text-anchor="middle" stroke="#858585" stroke-width="0.25">10</text>
<text x="1306.30" y="497.25" font-size="11.2" fill="#858585" text-anchor="middle" stroke="#858585" stroke-width="0.25">11</text>
<text x="1329.55" y="497.25" font-size="11.2" fill="#858585" text-anchor="middle" stroke="#858585" stroke-width="0.25">12</text>
<text x="1352.80" y="497.25" font-size="11.2" fill="#858585" text-anchor="middle" stroke="#858585" stroke-width="0.25">13</text>
<text x="1376.05" y="497.25" font-size="11.2" fill="#858585" text-anchor="middle" stroke="#858585" stroke-width="0.25">14</text>
<text x="1399.30" y="497.25" font-size="11.2" fill="#858585" text-anchor="middle" stroke="#858585" stroke-width="0.25">15</text>
<text x="1422.55" y="497.25" font-size="11.2" fill="#858585" text-anchor="middle" stroke="#858585" stroke-width="0.25">16</text>
<text x="1445.80" y="497.25" font-size="11.2" fill="#858585" text-anchor="middle" stroke="#858585" stroke-width="0.25">17</text>
<text x="1469.05" y="497.25" font-size="11.2" fill="#858585" text-anchor="middle" stroke="#858585" stroke-width="0.25">18</text>
<text x="1492.30" y="497.25" font-size="11.2" fill="#858585" text-anchor="middle" stroke="#858585" stroke-width="0.25">19</text>
<text x="1515.55" y="497.25" font-size="11.2" fill="#858585" text-anchor="middle" stroke="#858585" stroke-width="0.25">20</text>
<text x="1538.80" y="497.25" font-size="11.2" fill="#858585" text-anchor="middle" stroke="#858585" stroke-width="0.25">21</text>
<text x="1562.05" y="497.25" font-size="11.2" fill="#858585" text-anchor="middle" stroke="#858585" stroke-width="0.25">22</text>
<text x="1585.30" y="497.25" font-size="11.2" fill="#858585" text-anchor="middle" stroke="#858585" stroke-width="0.25">23</text>
<g transform="translate(20.70,592.90) rotate(-90)">
<text x="-15.80" y="4.33" font-size="12.6" fill="#bdbdbd" font-weight="bold" textLength="31.60" lengthAdjust="spacingAndGlyphs" stroke="#bdbdbd" stroke-width="0.5">OPEN</text>
</g>
<text x="77.00" y="559.50" font-size="12.6" fill="#808080" font-weight="bold" textLength="62.50" lengthAdjust="spacingAndGlyphs">Open Rate</text>
<text x="88.60" y="577.30" font-size="12.6" fill="#808080" font-weight="bold" textLength="38.00" lengthAdjust="spacingAndGlyphs">41.2%</text>
<circle cx="107.9" cy="618.1" r="20.7" fill="#ffffff" stroke="#5a9195" stroke-width="1.1"/>
<path d="M107.9 618.1 L107.9 596.9 A21.2 21.2 0 0 1 119.03 636.14 Z" fill="#5a9195"/>
<rect x="217.00" y="542.00" width="583.00" height="1" fill="#e9e9e9"/>
<rect x="217.00" y="566.90" width="583.00" height="1" fill="#e9e9e9"/>
<rect x="217.00" y="591.80" width="583.00" height="1" fill="#e9e9e9"/>
<rect x="217.00" y="616.60" width="583.00" height="1" fill="#efefef"/>
<text x="209.40" y="551.35" font-size="11.2" fill="#858585" text-anchor="end" stroke="#858585" stroke-width="0.25">1500</text>
<text x="208.80" y="571.25" font-size="11.2" fill="#858585" text-anchor="end" stroke="#858585" stroke-width="0.25">1000</text>
<text x="208.80" y="596.15" font-size="11.2" fill="#858585" text-anchor="end" stroke="#858585" stroke-width="0.25">500</text>
<text x="208.80" y="612.85" font-size="11.2" fill="#858585" text-anchor="end" stroke="#858585" stroke-width="0.25">0</text>
<polygon points="242.20,617.00 242.20,616.80 251.40,616.30 255.30,612.40 261.90,615.00 265.10,616.30 266.50,616.00 267.80,600.60 268.95,591.40 270.05,591.40 271.70,602.00 275.00,602.60 278.90,609.10 281.50,604.60 283.65,597.30 284.75,597.30 288.10,609.80 293.40,613.70 298.60,615.00 307.80,616.30 318.30,616.30 322.20,611.80 328.80,615.30 335.40,614.50 339.30,613.70 343.20,614.20 346.50,603.20 348.50,570.40 350.40,567.20 352.40,567.80 355.00,594.00 359.00,607.80 364.20,612.40 370.00,615.40 378.00,616.30 420.00,616.30 470.00,616.00 530.00,615.80 540.00,615.40 546.70,613.70 549.60,607.00 550.70,580.00 552.05,550.20 553.15,550.20 554.60,572.00 558.00,594.60 560.85,582.20 561.95,582.20 564.70,598.00 569.20,609.20 576.00,613.20 590.60,614.90 600.70,616.20 612.00,612.60 618.70,610.40 623.20,605.30 626.60,611.00 635.60,613.20 643.50,615.80 669.40,616.50 670.50,602.50 673.05,592.40 674.15,592.40 678.40,611.50 684.00,608.00 690.70,613.20 696.70,609.20 701.80,607.00 706.90,611.00 711.40,612.60 714.70,608.10 717.05,598.00 718.15,598.00 723.70,610.40 726.60,612.60 729.40,607.00 732.70,590.10 735.60,590.70 739.50,602.50 745.10,608.70 749.60,609.20 750.70,593.50 752.75,542.90 753.85,542.90 756.90,591.20 762.00,601.40 767.65,580.00 768.75,580.00 773.20,595.70 774.40,616.80 774.40,617.00" fill="#5a9195"/>
<clipPath id="cl7"><polygon points="242.20,617.00 242.20,616.80 251.40,616.30 255.30,612.40 261.90,615.00 265.10,616.30 266.50,616.00 267.80,600.60 268.95,591.40 270.05,591.40 271.70,602.00 275.00,602.60 278.90,609.10 281.50,604.60 283.65,597.30 284.75,597.30 288.10,609.80 293.40,613.70 298.60,615.00 307.80,616.30 318.30,616.30 322.20,611.80 328.80,615.30 335.40,614.50 339.30,613.70 343.20,614.20 346.50,603.20 348.50,570.40 350.40,567.20 352.40,567.80 355.00,594.00 359.00,607.80 364.20,612.40 370.00,615.40 378.00,616.30 420.00,616.30 470.00,616.00 530.00,615.80 540.00,615.40 546.70,613.70 549.60,607.00 550.70,580.00 552.05,550.20 553.15,550.20 554.60,572.00 558.00,594.60 560.85,582.20 561.95,582.20 564.70,598.00 569.20,609.20 576.00,613.20 590.60,614.90 600.70,616.20 612.00,612.60 618.70,610.40 623.20,605.30 626.60,611.00 635.60,613.20 643.50,615.80 669.40,616.50 670.50,602.50 673.05,592.40 674.15,592.40 678.40,611.50 684.00,608.00 690.70,613.20 696.70,609.20 701.80,607.00 706.90,611.00 711.40,612.60 714.70,608.10 717.05,598.00 718.15,598.00 723.70,610.40 726.60,612.60 729.40,607.00 732.70,590.10 735.60,590.70 739.50,602.50 745.10,608.70 749.60,609.20 750.70,593.50 752.75,542.90 753.85,542.90 756.90,591.20 762.00,601.40 767.65,580.00 768.75,580.00 773.20,595.70 774.40,616.80 774.40,617.00"/></clipPath>
<path d="M217.00 610.90H800.00" stroke="#aaaaaa" stroke-width="2" stroke-dasharray="5 3" fill="none"/>
<path d="M217.00 610.90H800.00" stroke="#e2e2e2" stroke-width="2" stroke-dasharray="5 3" fill="none" clip-path="url(#cl7)"/>
<text x="219.20" y="607.10" font-size="9" fill="#6a6a6a" textLength="15.20" lengthAdjust="spacingAndGlyphs" stroke="#6a6a6a" stroke-width="0.15">AVG</text>
<text x="225.50" y="636.05" font-size="11.2" fill="#858585" textLength="32.00" lengthAdjust="spacingAndGlyphs" stroke="#858585" stroke-width="0.25">Oct 26</text>
<text x="297.00" y="636.05" font-size="11.2" fill="#858585" textLength="32.00" lengthAdjust="spacingAndGlyphs" stroke="#858585" stroke-width="0.25">Oct 27</text>
<text x="367.50" y="636.05" font-size="11.2" fill="#858585" textLength="32.00" lengthAdjust="spacingAndGlyphs" stroke="#858585" stroke-width="0.25">Oct 28</text>
<text x="438.50" y="636.05" font-size="11.2" fill="#858585" textLength="32.00" lengthAdjust="spacingAndGlyphs" stroke="#858585" stroke-width="0.25">Oct 29</text>
<text x="508.50" y="636.05" font-size="11.2" fill="#858585" textLength="32.00" lengthAdjust="spacingAndGlyphs" stroke="#858585" stroke-width="0.25">Oct 30</text>
<text x="579.50" y="636.05" font-size="11.2" fill="#858585" textLength="32.00" lengthAdjust="spacingAndGlyphs" stroke="#858585" stroke-width="0.25">Oct 31</text>
<text x="652.65" y="636.05" font-size="11.2" fill="#858585" textLength="27.30" lengthAdjust="spacingAndGlyphs" stroke="#858585" stroke-width="0.25">Nov 1</text>
<text x="723.85" y="636.05" font-size="11.2" fill="#858585" textLength="27.30" lengthAdjust="spacingAndGlyphs" stroke="#858585" stroke-width="0.25">Nov 2</text>
<rect x="840.00" y="545.70" width="156.80" height="1" fill="#e9e9e9"/>
<rect x="840.00" y="563.90" width="156.80" height="1" fill="#e9e9e9"/>
<rect x="840.00" y="581.70" width="156.80" height="1" fill="#e9e9e9"/>
<rect x="840.00" y="598.60" width="156.80" height="1" fill="#e9e9e9"/>
<rect x="840.00" y="616.60" width="156.80" height="1" fill="#efefef"/>
<rect x="840.00" y="615.00" width="20.00" height="1.90" fill="#5a9195"/>
<rect x="863.00" y="577.80" width="20.00" height="39.10" fill="#5a9195"/>
<rect x="885.10" y="604.90" width="19.90" height="12.00" fill="#5a9195"/>
<rect x="908.10" y="575.80" width="19.90" height="41.10" fill="#5a9195"/>
<rect x="931.20" y="543.10" width="19.80" height="73.80" fill="#5a9195"/>
<rect x="953.20" y="585.00" width="19.80" height="31.90" fill="#5a9195"/>
<rect x="976.10" y="615.00" width="19.90" height="1.90" fill="#5a9195"/>
<clipPath id="cl8"><rect x="840.00" y="615.00" width="20.00" height="1.90"/><rect x="863.00" y="577.80" width="20.00" height="39.10"/><rect x="885.10" y="604.90" width="19.90" height="12.00"/><rect x="908.10" y="575.80" width="19.90" height="41.10"/><rect x="931.20" y="543.10" width="19.80" height="73.80"/><rect x="953.20" y="585.00" width="19.80" height="31.90"/><rect x="976.10" y="615.00" width="19.90" height="1.90"/></clipPath>
<path d="M840.00 587.70H996.80" stroke="#aaaaaa" stroke-width="2" stroke-dasharray="5 3" fill="none"/>
<path d="M840.00 587.70H996.80" stroke="#e2e2e2" stroke-width="2" stroke-dasharray="5 3" fill="none" clip-path="url(#cl8)"/>
<text x="842.00" y="584.20" font-size="9" fill="#6a6a6a" textLength="15.20" lengthAdjust="spacingAndGlyphs" stroke="#6a6a6a" stroke-width="0.15">AVG</text>
<text x="833.20" y="551.05" font-size="11.2" fill="#858585" text-anchor="end" stroke="#858585" stroke-width="0.25">8K</text>
<text x="833.20" y="568.25" font-size="11.2" fill="#858585" text-anchor="end" stroke="#858585" stroke-width="0.25">6K</text>
<text x="833.20" y="586.05" font-size="11.2" fill="#858585" text-anchor="end" stroke="#858585" stroke-width="0.25">4K</text>
<text x="833.20" y="603.25" font-size="11.2" fill="#858585" text-anchor="end" stroke="#858585" stroke-width="0.25">2K</text>
<text x="849.00" y="632.85" font-size="11.2" fill="#858585" text-anchor="middle" stroke="#858585" stroke-width="0.25">S</text>
<text x="872.00" y="632.85" font-size="11.2" fill="#858585" text-anchor="middle" stroke="#858585" stroke-width="0.25">M</text>
<text x="894.50" y="632.85" font-size="11.2" fill="#858585" text-anchor="middle" stroke="#858585" stroke-width="0.25">T</text>
<text x="917.50" y="632.85" font-size="11.2" fill="#858585" text-anchor="middle" stroke="#858585" stroke-width="0.25">W</text>
<text x="940.00" y="632.85" font-size="11.2" fill="#858585" text-anchor="middle" stroke="#858585" stroke-width="0.25">T</text>
<text x="962.50" y="632.85" font-size="11.2" fill="#858585" text-anchor="middle" stroke="#858585" stroke-width="0.25">F</text>
<text x="985.00" y="632.85" font-size="11.2" fill="#858585" text-anchor="middle" stroke="#858585" stroke-width="0.25">S</text>
<rect x="1040.00" y="561.90" width="556.00" height="1" fill="#e9e9e9"/>
<rect x="1040.00" y="589.10" width="556.00" height="1" fill="#e9e9e9"/>
<rect x="1040.00" y="616.60" width="556.00" height="1" fill="#efefef"/>
<rect x="1040.25" y="605.00" width="20.40" height="11.90" fill="#5a9195"/>
<rect x="1063.50" y="607.80" width="20.40" height="9.10" fill="#5a9195"/>
<rect x="1086.75" y="597.00" width="20.40" height="19.90" fill="#5a9195"/>
<rect x="1110.00" y="599.90" width="20.40" height="17.00" fill="#5a9195"/>
<rect x="1133.25" y="603.10" width="20.40" height="13.80" fill="#5a9195"/>
<rect x="1156.50" y="566.00" width="20.40" height="50.90" fill="#5a9195"/>
<rect x="1179.75" y="591.30" width="20.40" height="25.60" fill="#5a9195"/>
<rect x="1203.00" y="597.00" width="20.40" height="19.90" fill="#5a9195"/>
<rect x="1226.25" y="600.00" width="20.40" height="16.90" fill="#5a9195"/>
<rect x="1249.50" y="543.00" width="20.40" height="73.90" fill="#5a9195"/>
<rect x="1272.75" y="563.00" width="20.40" height="53.90" fill="#5a9195"/>
<rect x="1296.00" y="572.00" width="20.40" height="44.90" fill="#5a9195"/>
<rect x="1319.25" y="547.00" width="20.40" height="69.90" fill="#5a9195"/>
<rect x="1342.50" y="569.00" width="20.40" height="47.90" fill="#5a9195"/>
<rect x="1365.75" y="585.00" width="20.40" height="31.90" fill="#5a9195"/>
<rect x="1389.00" y="598.00" width="20.40" height="18.90" fill="#5a9195"/>
<rect x="1412.25" y="603.00" width="20.40" height="13.90" fill="#5a9195"/>
<rect x="1435.50" y="599.00" width="20.40" height="17.90" fill="#5a9195"/>
<rect x="1458.75" y="604.00" width="20.40" height="12.90" fill="#5a9195"/>
<rect x="1482.00" y="609.00" width="20.40" height="7.90" fill="#5a9195"/>
<rect x="1505.25" y="612.00" width="20.40" height="4.90" fill="#5a9195"/>
<rect x="1528.50" y="609.00" width="20.40" height="7.90" fill="#5a9195"/>
<rect x="1551.75" y="599.00" width="20.40" height="17.90" fill="#5a9195"/>
<rect x="1575.00" y="599.00" width="20.40" height="17.90" fill="#5a9195"/>
<clipPath id="cl9"><rect x="1040.25" y="605.00" width="20.40" height="11.90"/><rect x="1063.50" y="607.80" width="20.40" height="9.10"/><rect x="1086.75" y="597.00" width="20.40" height="19.90"/><rect x="1110.00" y="599.90" width="20.40" height="17.00"/><rect x="1133.25" y="603.10" width="20.40" height="13.80"/><rect x="1156.50" y="566.00" width="20.40" height="50.90"/><rect x="1179.75" y="591.30" width="20.40" height="25.60"/><rect x="1203.00" y="597.00" width="20.40" height="19.90"/><rect x="1226.25" y="600.00" width="20.40" height="16.90"/><rect x="1249.50" y="543.00" width="20.40" height="73.90"/><rect x="1272.75" y="563.00" width="20.40" height="53.90"/><rect x="1296.00" y="572.00" width="20.40" height="44.90"/><rect x="1319.25" y="547.00" width="20.40" height="69.90"/><rect x="1342.50" y="569.00" width="20.40" height="47.90"/><rect x="1365.75" y="585.00" width="20.40" height="31.90"/><rect x="1389.00" y="598.00" width="20.40" height="18.90"/><rect x="1412.25" y="603.00" width="20.40" height="13.90"/><rect x="1435.50" y="599.00" width="20.40" height="17.90"/><rect x="1458.75" y="604.00" width="20.40" height="12.90"/><rect x="1482.00" y="609.00" width="20.40" height="7.90"/><rect x="1505.25" y="612.00" width="20.40" height="4.90"/><rect x="1528.50" y="609.00" width="20.40" height="7.90"/><rect x="1551.75" y="599.00" width="20.40" height="17.90"/><rect x="1575.00" y="599.00" width="20.40" height="17.90"/></clipPath>
<path d="M1040.00 590.90H1596.00" stroke="#aaaaaa" stroke-width="2" stroke-dasharray="5 3" fill="none"/>
<path d="M1040.00 590.90H1596.00" stroke="#e2e2e2" stroke-width="2" stroke-dasharray="5 3" fill="none" clip-path="url(#cl9)"/>
<text x="1042.00" y="587.50" font-size="9" fill="#6a6a6a" textLength="15.20" lengthAdjust="spacingAndGlyphs" stroke="#6a6a6a" stroke-width="0.15">AVG</text>
<text x="1032.30" y="566.25" font-size="11.2" fill="#858585" text-anchor="end" stroke="#858585" stroke-width="0.25">2K</text>
<text x="1032.30" y="593.45" font-size="11.2" fill="#858585" text-anchor="end" stroke="#858585" stroke-width="0.25">1K</text>
<text x="1032.30" y="613.15" font-size="11.2" fill="#858585" text-anchor="end" stroke="#858585" stroke-width="0.25">0K</text>
<text x="1050.45" y="633.25" font-size="11.2" fill="#858585" text-anchor="middle" stroke="#858585" stroke-width="0.25">0</text>
<text x="1073.70" y="633.25" font-size="11.2" fill="#858585" text-anchor="middle" stroke="#858585" stroke-width="0.25">1</text>
<text x="1096.95" y="633.25" font-size="11.2" fill="#858585" text-anchor="middle" stroke="#858585" stroke-width="0.25">2</text>
<text x="1120.20" y="633.25" font-size="11.2" fill="#858585" text-anchor="middle" stroke="#858585" stroke-width="0.25">3</text>
<text x="1143.45" y="633.25" font-size="11.2" fill="#858585" text-anchor="middle" stroke="#858585" stroke-width="0.25">4</text>
<text x="1166.70" y="633.25" font-size="11.2" fill="#858585" text-anchor="middle" stroke="#858585" stroke-width="0.25">5</text>
<text x="1189.95" y="633.25" font-size="11.2" fill="#858585" text-anchor="middle" stroke="#858585" stroke-width="0.25">6</text>
<text x="1213.20" y="633.25" font-size="11.2" fill="#858585" text-anchor="middle" stroke="#858585" stroke-width="0.25">7</text>
<text x="1236.45" y="633.25" font-size="11.2" fill="#858585" text-anchor="middle" stroke="#858585" stroke-width="0.25">8</text>
<text x="1259.70" y="633.25" font-size="11.2" fill="#858585" text-anchor="middle" stroke="#858585" stroke-width="0.25">9</text>
<text x="1282.95" y="633.25" font-size="11.2" fill="#858585" text-anchor="middle" stroke="#858585" stroke-width="0.25">10</text>
<text x="1306.20" y="633.25" font-size="11.2" fill="#858585" text-anchor="middle" stroke="#858585" stroke-width="0.25">11</text>
<text x="1329.45" y="633.25" font-size="11.2" fill="#858585" text-anchor="middle" stroke="#858585" stroke-width="0.25">12</text>
<text x="1352.70" y="633.25" font-size="11.2" fill="#858585" text-anchor="middle" stroke="#858585" stroke-width="0.25">13</text>
<text x="1375.95" y="633.25" font-size="11.2" fill="#858585" text-anchor="middle" stroke="#858585" stroke-width="0.25">14</text>
<text x="1399.20" y="633.25" font-size="11.2" fill="#858585" text-anchor="middle" stroke="#858585" stroke-width="0.25">15</text>
<text x="1422.45" y="633.25" font-size="11.2" fill="#858585" text-anchor="middle" stroke="#858585" stroke-width="0.25">16</text>
<text x="1445.70" y="633.25" font-size="11.2" fill="#858585" text-anchor="middle" stroke="#858585" stroke-width="0.25">17</text>
<text x="1468.95" y="633.25" font-size="11.2" fill="#858585" text-anchor="middle" stroke="#858585" stroke-width="0.25">18</text>
<text x="1492.20" y="633.25" font-size="11.2" fill="#858585" text-anchor="middle" stroke="#858585" stroke-width="0.25">19</text>
<text x="1515.45" y="633.25" font-size="11.2" fill="#858585" text-anchor="middle" stroke="#858585" stroke-width="0.25">20</text>
<text x="1538.70" y="633.25" font-size="11.2" fill="#858585" text-anchor="middle" stroke="#858585" stroke-width="0.25">21</text>
<text x="1561.95" y="633.25" font-size="11.2" fill="#858585" text-anchor="middle" stroke="#858585" stroke-width="0.25">22</text>
<text x="1585.20" y="633.25" font-size="11.2" fill="#858585" text-anchor="middle" stroke="#858585" stroke-width="0.25">23</text>
<g transform="translate(20.70,728.95) rotate(-90)">
<text x="-42.25" y="4.33" font-size="12.6" fill="#bdbdbd" font-weight="bold" textLength="84.50" lengthAdjust="spacingAndGlyphs" stroke="#bdbdbd" stroke-width="0.5">CLICK-TO-OPEN</text>
</g>
<text x="67.30" y="695.20" font-size="12.6" fill="#808080" font-weight="bold" textLength="81.00" lengthAdjust="spacingAndGlyphs">Click-to-Open</text>
<text x="92.70" y="713.00" font-size="12.6" fill="#808080" font-weight="bold" textLength="30.40" lengthAdjust="spacingAndGlyphs">9.6%</text>
<circle cx="107.9" cy="754.5" r="20.5" fill="#ffffff" stroke="#f5913a" stroke-width="1.1"/>
<path d="M107.9 754.5 L107.9 733.5 A21.0 21.0 0 0 1 119.81 737.21 Z" fill="#f5913a"/>
<rect x="213.00" y="689.90" width="587.00" height="1" fill="#e9e9e9"/>
<rect x="213.00" y="710.80" width="587.00" height="1" fill="#e9e9e9"/>
<rect x="213.00" y="731.90" width="587.00" height="1" fill="#e9e9e9"/>
<rect x="213.00" y="752.40" width="587.00" height="1" fill="#efefef"/>
<text x="204.60" y="694.45" font-size="11.2" fill="#858585" text-anchor="end" stroke="#858585" stroke-width="0.25">150</text>
<text x="204.60" y="715.05" font-size="11.2" fill="#858585" text-anchor="end" stroke="#858585" stroke-width="0.25">100</text>
<text x="204.60" y="736.35" font-size="11.2" fill="#858585" text-anchor="end" stroke="#858585" stroke-width="0.25">50</text>
<polygon points="238.70,752.90 238.70,752.70 242.90,751.10 244.90,751.10 247.00,735.30 251.10,735.30 253.80,749.70 257.30,752.20 260.70,748.30 262.25,678.90 263.35,678.90 266.20,741.50 269.00,738.00 271.70,748.30 277.35,739.40 278.45,739.40 281.30,748.30 288.20,752.50 300.00,752.50 306.10,751.10 311.60,752.50 316.40,748.30 321.20,752.50 325.30,750.40 328.10,751.80 331.50,749.00 337.70,751.10 343.90,732.50 348.00,737.40 351.40,749.70 362.40,750.40 369.30,752.50 485.00,752.60 512.00,752.20 516.00,752.60 519.40,751.00 523.00,752.60 530.00,752.00 537.50,748.00 541.00,750.00 545.60,749.90 546.70,733.00 549.25,682.90 550.35,682.90 552.40,726.20 554.60,737.50 558.05,729.00 559.15,729.00 563.60,743.70 572.60,749.30 585.00,751.00 594.00,752.70 605.20,752.70 612.00,747.60 616.50,750.40 620.65,738.00 621.75,738.00 627.70,749.30 637.90,752.10 664.90,752.70 671.80,742.00 676.10,747.60 681.70,746.50 689.60,751.00 694.50,746.50 699.00,740.30 702.40,744.80 706.90,751.00 712.50,746.50 717.00,740.30 720.40,746.00 726.00,749.90 729.40,739.70 731.60,734.10 734.40,732.40 737.20,740.90 740.10,739.20 743.40,745.40 746.20,744.80 749.10,743.70 752.25,697.60 753.35,697.60 757.50,728.50 762.00,742.00 763.70,742.00 767.05,722.30 768.15,722.30 771.00,733.00 773.80,736.40 773.90,752.70 773.90,752.90" fill="#f5913a"/>
<clipPath id="cl10"><polygon points="238.70,752.90 238.70,752.70 242.90,751.10 244.90,751.10 247.00,735.30 251.10,735.30 253.80,749.70 257.30,752.20 260.70,748.30 262.25,678.90 263.35,678.90 266.20,741.50 269.00,738.00 271.70,748.30 277.35,739.40 278.45,739.40 281.30,748.30 288.20,752.50 300.00,752.50 306.10,751.10 311.60,752.50 316.40,748.30 321.20,752.50 325.30,750.40 328.10,751.80 331.50,749.00 337.70,751.10 343.90,732.50 348.00,737.40 351.40,749.70 362.40,750.40 369.30,752.50 485.00,752.60 512.00,752.20 516.00,752.60 519.40,751.00 523.00,752.60 530.00,752.00 537.50,748.00 541.00,750.00 545.60,749.90 546.70,733.00 549.25,682.90 550.35,682.90 552.40,726.20 554.60,737.50 558.05,729.00 559.15,729.00 563.60,743.70 572.60,749.30 585.00,751.00 594.00,752.70 605.20,752.70 612.00,747.60 616.50,750.40 620.65,738.00 621.75,738.00 627.70,749.30 637.90,752.10 664.90,752.70 671.80,742.00 676.10,747.60 681.70,746.50 689.60,751.00 694.50,746.50 699.00,740.30 702.40,744.80 706.90,751.00 712.50,746.50 717.00,740.30 720.40,746.00 726.00,749.90 729.40,739.70 731.60,734.10 734.40,732.40 737.20,740.90 740.10,739.20 743.40,745.40 746.20,744.80 749.10,743.70 752.25,697.60 753.35,697.60 757.50,728.50 762.00,742.00 763.70,742.00 767.05,722.30 768.15,722.30 771.00,733.00 773.80,736.40 773.90,752.70 773.90,752.90"/></clipPath>
<path d="M213.00 746.80H800.00" stroke="#aaaaaa" stroke-width="2" stroke-dasharray="5 3" fill="none"/>
<path d="M213.00 746.80H800.00" stroke="#e2e2e2" stroke-width="2" stroke-dasharray="5 3" fill="none" clip-path="url(#cl10)"/>
<text x="215.00" y="743.50" font-size="9" fill="#6a6a6a" textLength="15.20" lengthAdjust="spacingAndGlyphs" stroke="#6a6a6a" stroke-width="0.15">AVG</text>
<text x="218.40" y="772.25" font-size="11.2" fill="#858585" textLength="32.00" lengthAdjust="spacingAndGlyphs" stroke="#858585" stroke-width="0.25">Oct 26</text>
<text x="290.40" y="772.25" font-size="11.2" fill="#858585" textLength="32.00" lengthAdjust="spacingAndGlyphs" stroke="#858585" stroke-width="0.25">Oct 27</text>
<text x="361.50" y="772.25" font-size="11.2" fill="#858585" textLength="32.00" lengthAdjust="spacingAndGlyphs" stroke="#858585" stroke-width="0.25">Oct 28</text>
<text x="433.40" y="772.25" font-size="11.2" fill="#858585" textLength="32.00" lengthAdjust="spacingAndGlyphs" stroke="#858585" stroke-width="0.25">Oct 29</text>
<text x="505.70" y="772.25" font-size="11.2" fill="#858585" textLength="32.00" lengthAdjust="spacingAndGlyphs" stroke="#858585" stroke-width="0.25">Oct 30</text>
<text x="577.50" y="772.25" font-size="11.2" fill="#858585" textLength="32.00" lengthAdjust="spacingAndGlyphs" stroke="#858585" stroke-width="0.25">Oct 31</text>
<text x="650.85" y="772.25" font-size="11.2" fill="#858585" textLength="27.30" lengthAdjust="spacingAndGlyphs" stroke="#858585" stroke-width="0.25">Nov 1</text>
<text x="722.85" y="772.25" font-size="11.2" fill="#858585" textLength="27.30" lengthAdjust="spacingAndGlyphs" stroke="#858585" stroke-width="0.25">Nov 2</text>
<rect x="849.70" y="679.80" width="154.80" height="1" fill="#e9e9e9"/>
<rect x="849.70" y="715.95" width="154.80" height="1" fill="#e9e9e9"/>
<rect x="849.70" y="752.50" width="154.80" height="1" fill="#efefef"/>
<rect x="851.20" y="752.00" width="18.60" height="0.80" fill="#f5913a"/>
<rect x="873.25" y="720.00" width="18.45" height="32.80" fill="#f5913a"/>
<rect x="895.00" y="744.00" width="18.75" height="8.80" fill="#f5913a"/>
<rect x="917.20" y="725.00" width="18.60" height="27.80" fill="#f5913a"/>
<rect x="939.25" y="679.00" width="18.45" height="73.80" fill="#f5913a"/>
<rect x="961.00" y="738.00" width="18.75" height="14.80" fill="#f5913a"/>
<rect x="983.20" y="752.00" width="18.60" height="0.80" fill="#f5913a"/>
<clipPath id="cl11"><rect x="851.20" y="752.00" width="18.60" height="0.80"/><rect x="873.25" y="720.00" width="18.45" height="32.80"/><rect x="895.00" y="744.00" width="18.75" height="8.80"/><rect x="917.20" y="725.00" width="18.60" height="27.80"/><rect x="939.25" y="679.00" width="18.45" height="73.80"/><rect x="961.00" y="738.00" width="18.75" height="14.80"/><rect x="983.20" y="752.00" width="18.60" height="0.80"/></clipPath>
<path d="M849.70 729.80H1004.50" stroke="#aaaaaa" stroke-width="2" stroke-dasharray="5 3" fill="none"/>
<path d="M849.70 729.80H1004.50" stroke="#e2e2e2" stroke-width="2" stroke-dasharray="5 3" fill="none" clip-path="url(#cl11)"/>
<text x="852.20" y="726.60" font-size="9" fill="#6a6a6a" textLength="15.20" lengthAdjust="spacingAndGlyphs" stroke="#6a6a6a" stroke-width="0.15">AVG</text>
<text x="842.60" y="687.35" font-size="11.2" fill="#858585" text-anchor="end" stroke="#858585" stroke-width="0.25">1000</text>
<text x="842.60" y="720.35" font-size="11.2" fill="#858585" text-anchor="end" stroke="#858585" stroke-width="0.25">500</text>
<text x="842.60" y="749.35" font-size="11.2" fill="#858585" text-anchor="end" stroke="#858585" stroke-width="0.25">0</text>
<text x="860.50" y="769.05" font-size="11.2" fill="#858585" text-anchor="middle" stroke="#858585" stroke-width="0.25">S</text>
<text x="882.48" y="769.05" font-size="11.2" fill="#858585" text-anchor="middle" stroke="#858585" stroke-width="0.25">M</text>
<text x="904.38" y="769.05" font-size="11.2" fill="#858585" text-anchor="middle" stroke="#858585" stroke-width="0.25">T</text>
<text x="926.50" y="769.05" font-size="11.2" fill="#858585" text-anchor="middle" stroke="#858585" stroke-width="0.25">W</text>
<text x="948.48" y="769.05" font-size="11.2" fill="#858585" text-anchor="middle" stroke="#858585" stroke-width="0.25">T</text>
<text x="970.38" y="769.05" font-size="11.2" fill="#858585" text-anchor="middle" stroke="#858585" stroke-width="0.25">F</text>
<text x="992.50" y="769.05" font-size="11.2" fill="#858585" text-anchor="middle" stroke="#858585" stroke-width="0.25">S</text>
<rect x="1047.00" y="683.60" width="549.00" height="1" fill="#e9e9e9"/>
<rect x="1047.00" y="700.70" width="549.00" height="1" fill="#e9e9e9"/>
<rect x="1047.00" y="717.90" width="549.00" height="1" fill="#e9e9e9"/>
<rect x="1047.00" y="752.60" width="549.00" height="1" fill="#efefef"/>
<rect x="1047.20" y="746.90" width="19.60" height="6.00" fill="#f5913a"/>
<rect x="1070.15" y="746.00" width="19.60" height="6.90" fill="#f5913a"/>
<rect x="1093.10" y="744.10" width="19.60" height="8.80" fill="#f5913a"/>
<rect x="1116.05" y="744.10" width="19.60" height="8.80" fill="#f5913a"/>
<rect x="1139.00" y="739.10" width="19.60" height="13.80" fill="#f5913a"/>
<rect x="1161.95" y="717.10" width="19.60" height="35.80" fill="#f5913a"/>
<rect x="1184.90" y="733.10" width="19.60" height="19.80" fill="#f5913a"/>
<rect x="1207.85" y="740.00" width="19.60" height="12.90" fill="#f5913a"/>
<rect x="1230.80" y="742.00" width="19.60" height="10.90" fill="#f5913a"/>
<rect x="1253.75" y="679.00" width="19.60" height="73.90" fill="#f5913a"/>
<rect x="1276.70" y="722.00" width="19.60" height="30.90" fill="#f5913a"/>
<rect x="1299.65" y="724.00" width="19.60" height="28.90" fill="#f5913a"/>
<rect x="1322.60" y="720.75" width="19.60" height="32.15" fill="#f5913a"/>
<rect x="1345.55" y="736.25" width="19.60" height="16.65" fill="#f5913a"/>
<rect x="1368.50" y="739.00" width="19.60" height="13.90" fill="#f5913a"/>
<rect x="1391.45" y="745.00" width="19.60" height="7.90" fill="#f5913a"/>
<rect x="1414.40" y="746.00" width="19.60" height="6.90" fill="#f5913a"/>
<rect x="1437.35" y="744.00" width="19.60" height="8.90" fill="#f5913a"/>
<rect x="1460.30" y="750.00" width="19.60" height="2.90" fill="#f5913a"/>
<rect x="1483.25" y="749.00" width="19.60" height="3.90" fill="#f5913a"/>
<rect x="1506.20" y="751.00" width="19.60" height="1.90" fill="#f5913a"/>
<rect x="1529.15" y="749.00" width="19.60" height="3.90" fill="#f5913a"/>
<rect x="1552.10" y="744.00" width="19.60" height="8.90" fill="#f5913a"/>
<rect x="1575.05" y="742.00" width="19.60" height="10.90" fill="#f5913a"/>
<clipPath id="cl12"><rect x="1047.20" y="746.90" width="19.60" height="6.00"/><rect x="1070.15" y="746.00" width="19.60" height="6.90"/><rect x="1093.10" y="744.10" width="19.60" height="8.80"/><rect x="1116.05" y="744.10" width="19.60" height="8.80"/><rect x="1139.00" y="739.10" width="19.60" height="13.80"/><rect x="1161.95" y="717.10" width="19.60" height="35.80"/><rect x="1184.90" y="733.10" width="19.60" height="19.80"/><rect x="1207.85" y="740.00" width="19.60" height="12.90"/><rect x="1230.80" y="742.00" width="19.60" height="10.90"/><rect x="1253.75" y="679.00" width="19.60" height="73.90"/><rect x="1276.70" y="722.00" width="19.60" height="30.90"/><rect x="1299.65" y="724.00" width="19.60" height="28.90"/><rect x="1322.60" y="720.75" width="19.60" height="32.15"/><rect x="1345.55" y="736.25" width="19.60" height="16.65"/><rect x="1368.50" y="739.00" width="19.60" height="13.90"/><rect x="1391.45" y="745.00" width="19.60" height="7.90"/><rect x="1414.40" y="746.00" width="19.60" height="6.90"/><rect x="1437.35" y="744.00" width="19.60" height="8.90"/><rect x="1460.30" y="750.00" width="19.60" height="2.90"/><rect x="1483.25" y="749.00" width="19.60" height="3.90"/><rect x="1506.20" y="751.00" width="19.60" height="1.90"/><rect x="1529.15" y="749.00" width="19.60" height="3.90"/><rect x="1552.10" y="744.00" width="19.60" height="8.90"/><rect x="1575.05" y="742.00" width="19.60" height="10.90"/></clipPath>
<path d="M1047.00 736.80H1596.00" stroke="#aaaaaa" stroke-width="2" stroke-dasharray="5 3" fill="none"/>
<path d="M1047.00 736.80H1596.00" stroke="#e2e2e2" stroke-width="2" stroke-dasharray="5 3" fill="none" clip-path="url(#cl12)"/>
<text x="1049.00" y="733.10" font-size="9" fill="#6a6a6a" textLength="15.20" lengthAdjust="spacingAndGlyphs" stroke="#6a6a6a" stroke-width="0.15">AVG</text>
<text x="1038.80" y="687.95" font-size="11.2" fill="#858585" text-anchor="end" stroke="#858585" stroke-width="0.25">400</text>
<text x="1038.80" y="705.05" font-size="11.2" fill="#858585" text-anchor="end" stroke="#858585" stroke-width="0.25">300</text>
<text x="1038.80" y="722.25" font-size="11.2" fill="#858585" text-anchor="end" stroke="#858585" stroke-width="0.25">200</text>
<text x="1038.80" y="740.10" font-size="11.2" fill="#858585" text-anchor="end" stroke="#858585" stroke-width="0.25">100</text>
<text x="1057.00" y="769.15" font-size="11.2" fill="#858585" text-anchor="middle" stroke="#858585" stroke-width="0.25">0</text>
<text x="1079.95" y="769.15" font-size="11.2" fill="#858585" text-anchor="middle" stroke="#858585" stroke-width="0.25">1</text>
<text x="1102.90" y="769.15" font-size="11.2" fill="#858585" text-anchor="middle" stroke="#858585" stroke-width="0.25">2</text>
<text x="1125.85" y="769.15" font-size="11.2" fill="#858585" text-anchor="middle" stroke="#858585" stroke-width="0.25">3</text>
<text x="1148.80" y="769.15" font-size="11.2" fill="#858585" text-anchor="middle" stroke="#858585" stroke-width="0.25">4</text>
<text x="1171.75" y="769.15" font-size="11.2" fill="#858585" text-anchor="middle" stroke="#858585" stroke-width="0.25">5</text>
<text x="1194.70" y="769.15" font-size="11.2" fill="#858585" text-anchor="middle" stroke="#858585" stroke-width="0.25">6</text>
<text x="1217.65" y="769.15" font-size="11.2" fill="#858585" text-anchor="middle" stroke="#858585" stroke-width="0.25">7</text>
<text x="1240.60" y="769.15" font-size="11.2" fill="#858585" text-anchor="middle" stroke="#858585" stroke-width="0.25">8</text>
<text x="1263.55" y="769.15" font-size="11.2" fill="#858585" text-anchor="middle" stroke="#858585" stroke-width="0.25">9</text>
<text x="1286.50" y="769.15" font-size="11.2" fill="#858585" text-anchor="middle" stroke="#858585" stroke-width="0.25">10</text>
<text x="1309.45" y="769.15" font-size="11.2" fill="#858585" text-anchor="middle" stroke="#858585" stroke-width="0.25">11</text>
<text x="1332.40" y="769.15" font-size="11.2" fill="#858585" text-anchor="middle" stroke="#858585" stroke-width="0.25">12</text>
<text x="1355.35" y="769.15" font-size="11.2" fill="#858585" text-anchor="middle" stroke="#858585" stroke-width="0.25">13</text>
<text x="1378.30" y="769.15" font-size="11.2" fill="#858585" text-anchor="middle" stroke="#858585" stroke-width="0.25">14</text>
<text x="1401.25" y="769.15" font-size="11.2" fill="#858585" text-anchor="middle" stroke="#858585" stroke-width="0.25">15</text>
<text x="1424.20" y="769.15" font-size="11.2" fill="#858585" text-anchor="middle" stroke="#858585" stroke-width="0.25">16</text>
<text x="1447.15" y="769.15" font-size="11.2" fill="#858585" text-anchor="middle" stroke="#858585" stroke-width="0.25">17</text>
<text x="1470.10" y="769.15" font-size="11.2" fill="#858585" text-anchor="middle" stroke="#858585" stroke-width="0.25">18</text>
<text x="1493.05" y="769.15" font-size="11.2" fill="#858585" text-anchor="middle" stroke="#858585" stroke-width="0.25">19</text>
<text x="1516.00" y="769.15" font-size="11.2" fill="#858585" text-anchor="middle" stroke="#858585" stroke-width="0.25">20</text>
<text x="1538.95" y="769.15" font-size="11.2" fill="#858585" text-anchor="middle" stroke="#858585" stroke-width="0.25">21</text>
<text x="1561.90" y="769.15" font-size="11.2" fill="#858585" text-anchor="middle" stroke="#858585" stroke-width="0.25">22</text>
<text x="1584.85" y="769.15" font-size="11.2" fill="#858585" text-anchor="middle" stroke="#858585" stroke-width="0.25">23</text>
<rect x="1030.6" y="766.4" width="10" height="10.4" fill="#fff" stroke="#555" stroke-width="1"/>
<path d="M1033 771.6H1038.2M1035.6 769V774.2" stroke="#555" stroke-width="1"/>
</svg>
</body></html>
